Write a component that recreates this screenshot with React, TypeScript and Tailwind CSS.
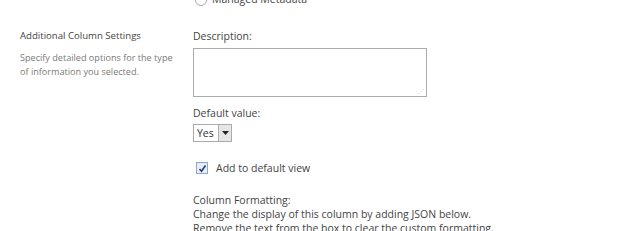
import React from 'react'

const font = { fontFamily: '"Open Sans", "Segoe UI", sans-serif' }

export default function App() {
  return (
    <div
      className="relative h-[231px] w-[624px] overflow-hidden bg-white text-[#444]"
      style={font}
    >
      {/* top, clipped radio */}
      <div className="absolute left-[195px] top-[-8px] flex items-center gap-[5px]">
        <span className="h-[12px] w-[12px] rounded-full border border-[#aaa] bg-white" />
        <span className="text-[10.5px] text-[#444]">Managed Metadata</span>
      </div>

      <div className="flex pt-[28px]">
        <div className="w-[193px] pl-[20px]">
          <h3 className="text-[9.6px] leading-[15px] text-[#444]">
            Additional Column Settings
          </h3>
          <p className="mt-[8px] w-[160px] text-[9.1px] leading-[14px] text-[#7a7a7a]">
            Specify detailed options for the type of information you selected.
          </p>
        </div>

        <div className="flex flex-col">
          <label className="text-[10.5px] leading-[16px] text-[#444]">
            Description:
          </label>
          <div className="relative mt-[4px] h-[49px] w-[234px] border border-[#ababab] bg-white">
            <span className="absolute bottom-[2px] right-[2px] text-[6px] leading-none text-[#bbb]">
              ⋰
            </span>
          </div>

          <label className="mt-[8px] text-[10.5px] leading-[16px] text-[#444]">
            Default value:
          </label>
          <div className="mt-[3px] flex h-[18px] w-[39px] items-stretch border border-[#ababab] bg-white">
            <span className="flex-1 pl-[3px] text-[10.5px] leading-[16px] text-[#333]">
              Yes
            </span>
            <span className="flex w-[13px] items-center justify-center border-l border-[#ababab] bg-[#e6e6e6]">
              <svg width="7" height="4" viewBox="0 0 7 4">
                <path d="M0 0h7L3.5 4z" fill="#222" />
              </svg>
            </span>
          </div>

          <div className="mt-[18px] flex items-center gap-[8px] pl-[3px]">
            <span className="flex h-[12px] w-[12px] items-center justify-center border border-[#8fa6c4] bg-[#e8eef7]">
              <svg width="9" height="9" viewBox="0 0 9 9">
                <path d="M1.5 5l2 2.2L7.5 1.5" fill="none" stroke="#1f3f7a" strokeWidth="1.6" />
              </svg>
            </span>
            <span className="text-[10.5px] leading-[16px] text-[#444]">
              Add to default view
            </span>
          </div>

          <div className="mt-[17px] text-[10.5px] leading-[14px] text-[#444]">
            <p>Column Formatting:</p>
            <p>Change the display of this column by adding JSON below.</p>
            <p>Remove the text from the box to clear the custom formatting.</p>
          </div>
        </div>
      </div>
    </div>
  )
}
